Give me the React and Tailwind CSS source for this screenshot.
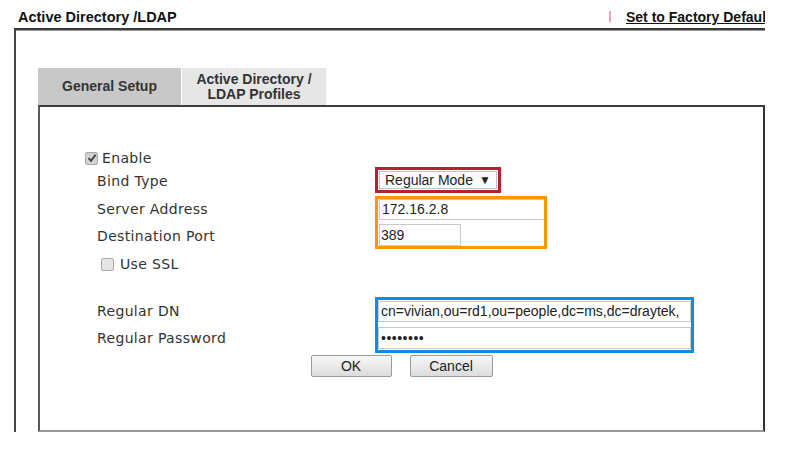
import React from "react";

function Check({ checked }) {
  return (
    <div
      className={
        "w-[13px] h-[13px] rounded-[2px] border border-[#a8a8a8] flex items-center justify-center shrink-0 " +
        (checked ? "bg-[#d3d3d3]" : "bg-[#e4e4e4]")
      }
    >
      {checked && (
        <svg width="10" height="10" viewBox="0 0 10 10">
          <path d="M1.5 5.2 L4 7.8 L8.6 1.8" fill="none" stroke="#3a3a3a" strokeWidth="1.8" />
        </svg>
      )}
    </div>
  );
}

export default function App() {
  const label = "text-[14px] text-[#333] tracking-[0.35px] font-['DejaVu_Sans',Verdana,sans-serif]";
  const arial = "font-['Liberation_Sans',Arial,sans-serif]";
  return (
    <div className={"w-[787px] h-[452px] bg-white overflow-hidden " + arial}>
      <div className="w-[765px] overflow-hidden">
        {/* header */}
        <div className="h-[28px] flex items-start">
          <div className="flex-1 pl-[18px] pt-[7px] text-[14.5px] font-bold text-[#111] whitespace-nowrap">
            Active Directory /LDAP
          </div>
          <div className="w-[156px] shrink-0 overflow-hidden flex items-start pt-[7px] whitespace-nowrap">
            <div className="w-[2px] h-[11px] mt-[4px] bg-[#f5a0b4] shrink-0" />
            <span className="ml-[15px] text-[14px] font-bold text-[#111] underline">
              Set to Factory Default
            </span>
          </div>
        </div>
        {/* outer box */}
        <div className="ml-[14px] h-[404px] border-l-2 border-t-2 border-l-[#444] border-t-[#3a3a3a] shadow-[inset_0_1px_0_#999] pl-[22px] pt-[38px]">
          {/* tabs */}
          <div className="flex h-[37px] gap-[1px] font-bold text-[14px] text-[#333]">
            <div className="w-[143px] bg-[#c8c8c8] flex items-center justify-center">General Setup</div>
            <div className="w-[144px] bg-[#e6e6e6] flex flex-col items-center justify-center leading-[15px]">
              <span>Active Directory /</span>
              <span>LDAP Profiles</span>
            </div>
          </div>
          {/* panel */}
          <div className="w-[727px] h-[327px] border-2 border-t-[#3c3c3c] border-l-[#5a5a5a] border-r-[#333] border-b-[#9a9a9a] pt-[42px]">
            <div className="pl-[45px] flex flex-col">
              {/* Enable */}
              <div className="h-[18px] flex items-center gap-[4px]">
                <Check checked />
                <span className={label}>Enable</span>
              </div>
              {/* Bind Type */}
              <div className="h-[26px] flex items-center">
                <div className={"w-[290px] pl-[12px] pt-[3px] " + label}>Bind Type</div>
                <div className="w-[126px] h-[26px] border-[3px] border-[#b3232f] p-[1px]">
                  <div className="h-full border border-[#c4c4c4] flex items-center justify-between pl-[5px] pr-[5px] text-[14px] text-[#222]">
                    <span>Regular Mode</span>
                    <span className="text-[12px] leading-none">▼</span>
                  </div>
                </div>
              </div>
              {/* Server + Port */}
              <div className="mt-[3px] flex">
                <div className={"w-[290px] pl-[12px] flex flex-col " + label}>
                  <div className="h-[26px] flex items-center">Server Address</div>
                  <div className="h-[27px] flex items-center pt-[1px]">Destination Port</div>
                </div>
                <div className="w-[172px] h-[53px] border-[3px] border-[#ff9600] pl-[1px] flex flex-col gap-[4px] overflow-hidden">
                  <div className="h-[21px] w-[170px] border border-[#c8c8c8] flex items-center pl-[2px] text-[14px] text-[#222]">
                    172.16.2.8
                  </div>
                  <div className="h-[22px] w-[82px] border border-[#c8c8c8] flex items-center pl-[1px] text-[14px] text-[#222]">
                    389
                  </div>
                </div>
              </div>
              {/* Use SSL */}
              <div className="h-[30px] pl-[16px] flex items-center gap-[6px]">
                <Check />
                <span className={label}>Use SSL</span>
              </div>
              {/* DN + Password */}
              <div className="mt-[18px] flex">
                <div className={"w-[290px] pl-[12px] flex flex-col pt-[3px] " + label}>
                  <div className="h-[23px] flex items-center">Regular DN</div>
                  <div className="h-[29px] flex items-center pt-[2px]">Regular Password</div>
                </div>
                <div className="w-[319px] h-[56px] border-[3px] border-[#0d8de6] pt-[1px] pb-[1px] flex flex-col gap-[5px]">
                  <div className="h-[21px] border border-[#c8c8c8] flex items-center pl-[2px] text-[14px] text-[#222] whitespace-nowrap overflow-hidden">
                    cn=vivian,ou=rd1,ou=people,dc=ms,dc=draytek,
                  </div>
                  <div className="h-[22px] border border-[#c8c8c8] flex items-center pl-[2px] text-[14px] text-[#222] tracking-[0.5px]">
                    ••••••••
                  </div>
                </div>
              </div>
            </div>
            {/* buttons */}
            <div className="mt-[2px] flex justify-center gap-[18px]">
              <div className="w-[81px] h-[22px] rounded-[2px] border border-[#9a9a9a] bg-gradient-to-b from-[#f7f7f7] to-[#dcdcdc] flex items-center justify-center text-[14px] text-[#222]">
                OK
              </div>
              <div className="w-[83px] h-[22px] rounded-[2px] border border-[#9a9a9a] bg-gradient-to-b from-[#f7f7f7] to-[#dcdcdc] flex items-center justify-center text-[14px] text-[#222]">
                Cancel
              </div>
            </div>
          </div>
        </div>
      </div>
    </div>
  );
}
